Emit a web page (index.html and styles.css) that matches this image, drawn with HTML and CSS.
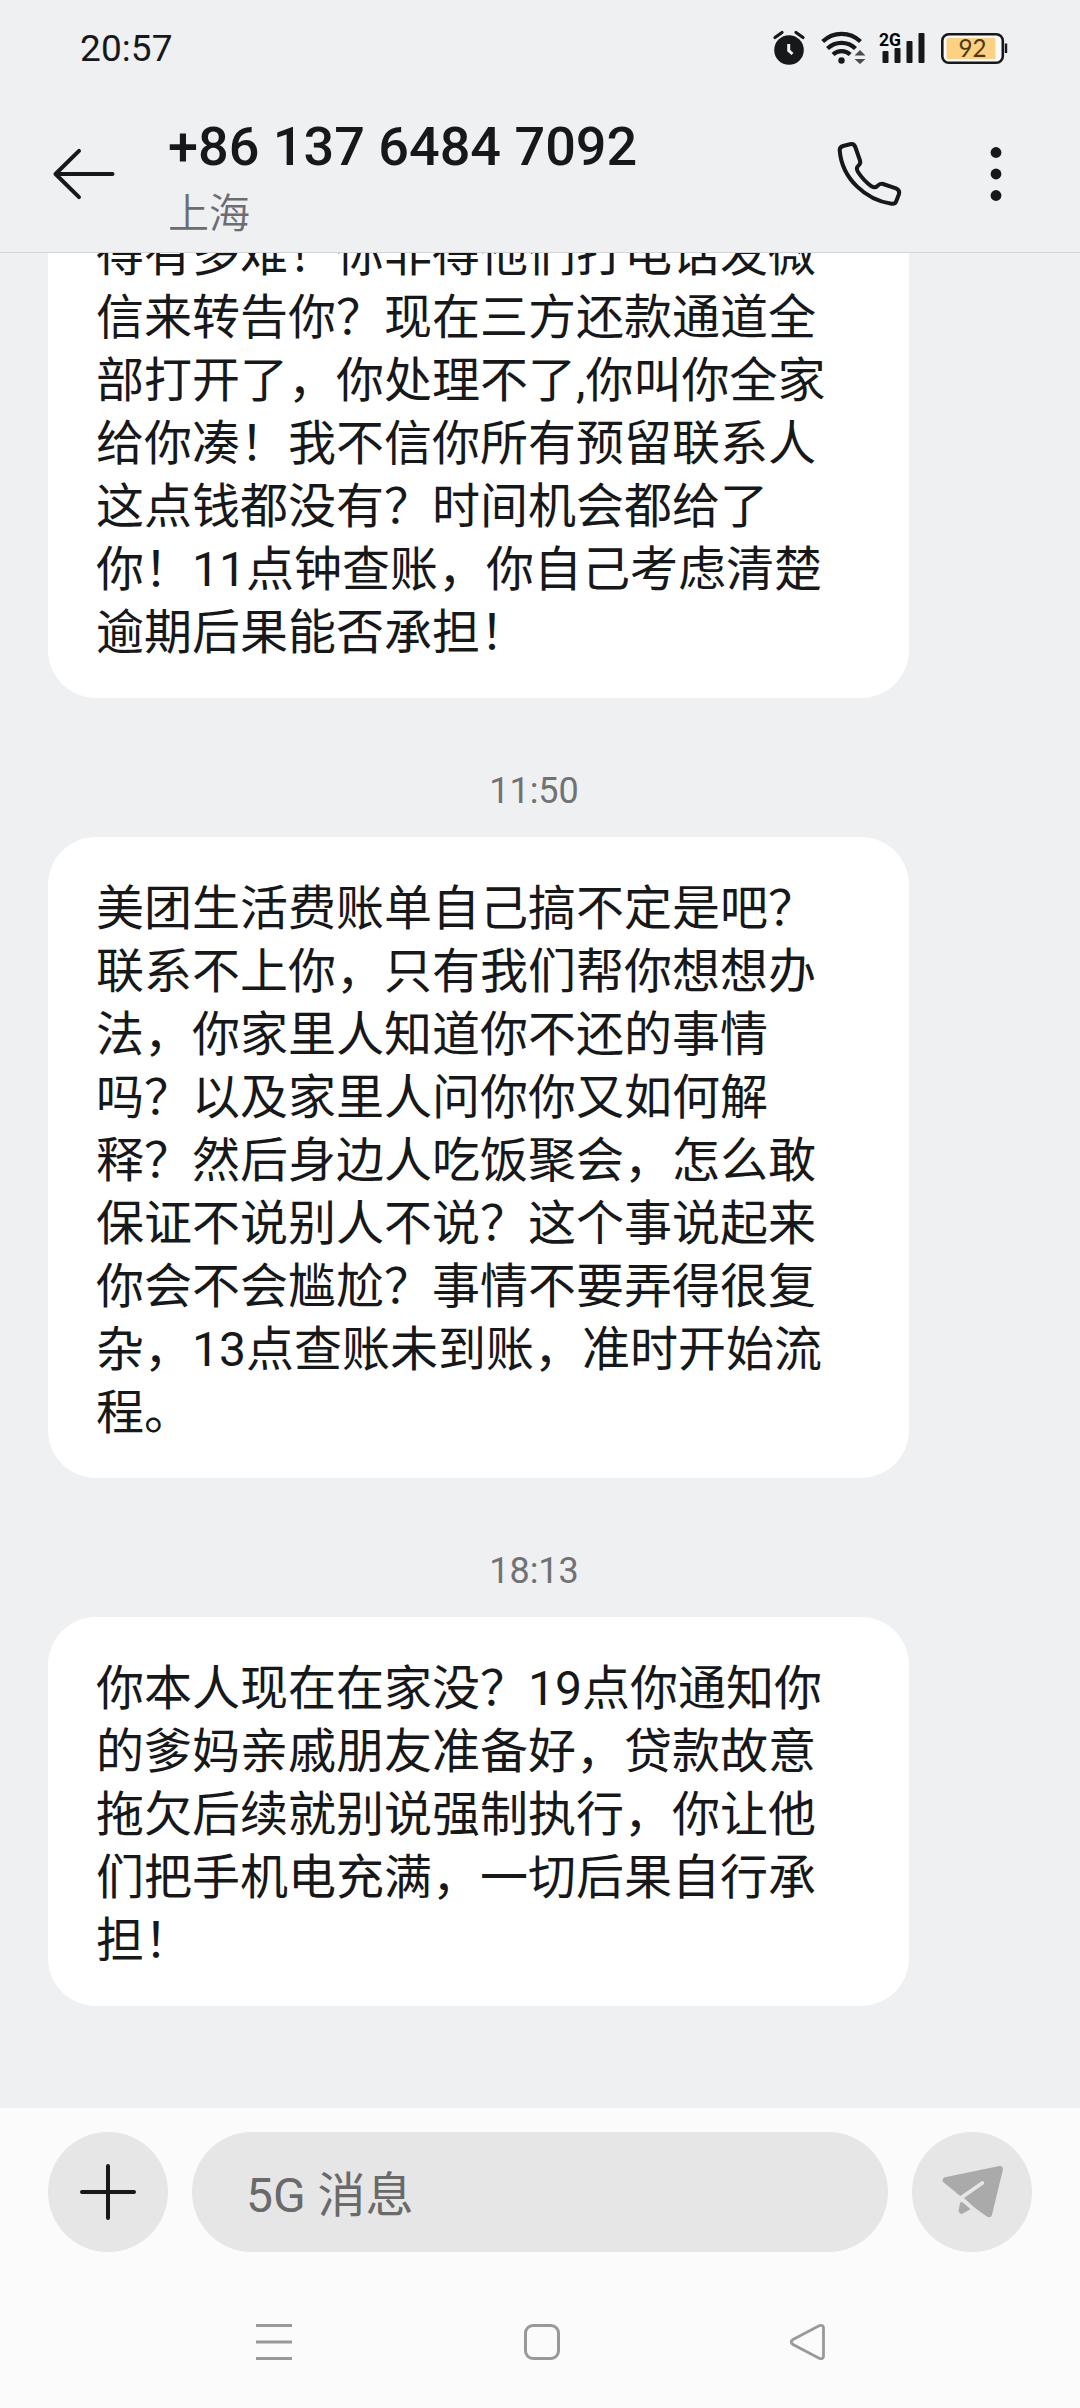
FILE: index.html
```html
<!DOCTYPE html>
<html lang="zh-CN">
<head>
<meta charset="utf-8">
<title>短信</title>
<link rel="stylesheet" href="styles.css">
</head>
<body>
<div class="screen">
  <div class="status">
    <span class="clock">20:57</span>
    <svg class="status-icons" width="270" height="60" viewBox="770 18 270 60">
      <g fill="#17181a">
        <circle cx="789" cy="50" r="14.8"/>
        <path d="M775 37.500L782 32.500M803 37.500L796 32.500" stroke="#17181a" stroke-width="3.200" stroke-linecap="round"/>
        <path d="M788.700 44V50.500L792.500 54" fill="none" stroke="#eff0f2" stroke-width="3"/>
        <g fill="none" stroke="#17181a" stroke-width="4.200">
          <path d="M822.700 41.500A27 27 0 0 1 860.500 41.500"/>
          <path d="M827.500 48.500A20 20 0 0 1 855.500 48.500"/>
          <path d="M833 54.500A12.500 12.500 0 0 1 850.200 54.500"/>
        </g>
        <circle cx="841.500" cy="60.500" r="3.200"/>
        <path d="M854.500 55.500L860 50L865.500 55.500ZM854.500 59L860 64L865.500 59Z" fill="#4a4b4d"/>
        <rect x="882.500" y="51" width="6" height="12" rx="1"/>
        <rect x="894.500" y="48" width="6" height="15" rx="1"/>
        <rect x="906.500" y="41" width="6" height="22" rx="1"/>
        <rect x="918.500" y="33" width="6" height="30" rx="1"/>
      </g>
      <text x="879" y="46" class="net" textLength="22" lengthAdjust="spacingAndGlyphs">2G</text>
      <rect x="942.300" y="34.300" width="60.500" height="28.500" rx="6.500" fill="#fafafa" stroke="#17181a" stroke-width="2.600"/>
      <rect x="946.500" y="38" width="49" height="21" rx="1.500" fill="#fcd182"/>
      <path d="M1006 43.500V53" stroke="#17181a" stroke-width="2.400"/>
      <text x="958.500" y="56.500" class="level" textLength="28" lengthAdjust="spacingAndGlyphs">92</text>
    </svg>
  </div>
  <header class="header">
    <svg class="back" width="68" height="60" viewBox="50 144 68 60" fill="none" stroke="#17181a" stroke-width="4" stroke-linecap="round" stroke-linejoin="round"><path d="M112.500 174H55.500M79 150.800L55.500 174L79 197.200"/></svg>
    <div class="contact">
      <div class="number">+86 137 6484 7092</div>
      <div class="place">上海</div>
    </div>
    <svg class="actions" width="180" height="72" viewBox="830 138 180 72">
      <path d="M843 146L850 144.200Q854 143.300 855.300 147L860 160.500Q861 163.500 858.500 165.500Q855.500 168 858 172Q863.500 180.500 871.500 186.300Q875 188.500 877.500 185.800Q880 183.300 883 184L896 188.300Q900 190 899 194L896.500 200.500Q895.500 204.300 891.500 203.800C866 200 842 179 839.700 150.500Q839.500 147.200 843 146Z" fill="none" stroke="#17181a" stroke-width="4" stroke-linejoin="round"/>
      <g fill="#17181a"><circle cx="996" cy="152.500" r="5.400"/><circle cx="996" cy="174" r="5.400"/><circle cx="996" cy="195.500" r="5.400"/></g>
    </svg>
  </header>
  <main class="thread">
    <div class="bubble">得有多难！你非得他们打电话发微<br>信来转告你？现在三方还款通道全<br>部打开了，你处理不了,你叫你全家<br>给你凑！我不信你所有预留联系人<br>这点钱都没有？时间机会都给了<br>你！11点钟查账，你自己考虑清楚<br>逾期后果能否承担！</div>
    <time class="stamp">11:50</time>
    <div class="bubble">美团生活费账单自己搞不定是吧？<br>联系不上你，只有我们帮你想想办<br>法，你家里人知道你不还的事情<br>吗？以及家里人问你你又如何解<br>释？然后身边人吃饭聚会，怎么敢<br>保证不说别人不说？这个事说起来<br>你会不会尴尬？事情不要弄得很复<br>杂，13点查账未到账，准时开始流<br>程。</div>
    <time class="stamp">18:13</time>
    <div class="bubble">你本人现在在家没？19点你通知你<br>的爹妈亲戚朋友准备好，贷款故意<br>拖欠后续就别说强制执行，你让他<br>们把手机电充满，一切后果自行承<br>担！</div>
  </main>
  <footer class="footer">
    <div class="composer">
      <div class="round"><svg width="60" height="60" viewBox="0 0 60 60" stroke="#17181a" stroke-width="4" stroke-linecap="round"><path d="M4 30H56M30 4V56"/></svg></div>
      <div class="input">5G 消息</div>
      <div class="round"><svg width="120" height="120" viewBox="912 2132 120 120"><g fill="#aaa" stroke="#aaa" stroke-width="6" stroke-linejoin="round"><path d="M945.700 2180.200L1000 2169L989 2214.200L966.500 2198.500L962.500 2194Z"/></g><path d="M961.500 2203.500L969 2208.500L961.500 2212.500L960 2211Z" fill="#aaa" stroke="#aaa" stroke-width="3" stroke-linejoin="round"/><path d="M960 2198.500L982.300 2183M961.500 2198.500L976 2211.500" fill="none" stroke="#e6e6e6" stroke-width="3.800" stroke-linecap="round"/></svg></div>
    </div>
    <nav class="nav">
      <svg width="42" height="42" viewBox="0 0 42 42" fill="none" stroke="#999" stroke-width="3"><path d="M3 4.500H39M3 21H39M3 37.500H39"/></svg>
      <svg width="42" height="42" viewBox="0 0 42 42" fill="none" stroke="#999" stroke-width="3"><rect x="5.500" y="4.500" width="33" height="33" rx="7.500"/></svg>
      <svg width="42" height="42" viewBox="0 0 42 42" fill="none" stroke="#999" stroke-width="2.800"><path d="M6 18.500L32.500 4.500Q36.500 3.500 36.500 7V35Q36.500 38.500 32.500 37.500L6 23.500Q2.500 21 6 18.500Z"/></svg>
    </nav>
  </footer>
</div>
</body>
</html>
```
FILE: styles.css
```css
* { box-sizing: border-box; }
body { margin: 0; background: #eff0f2; color: #17181a; font-family: Roboto, "Noto Sans CJK SC", sans-serif; }
svg { display: block; flex: none; }
.screen { width: 1080px; height: 2408px; display: flex; flex-direction: column; overflow: hidden; }
.status { height: 96px; flex: none; display: flex; justify-content: space-between; align-items: center; padding: 0 40px 0 80px; }
.clock { font-size: 37px; line-height: 42px; letter-spacing: 0.1px; padding-top: 1px; }
.net { font: 700 19px Roboto, sans-serif; }
.level { font: 400 25px Lato, sans-serif; fill: #4a3a15; }
.header { height: 157px; flex: none; display: flex; align-items: center; padding: 0 70px 0 50px; border-bottom: 1px solid #d4d5d7; }
.contact { flex: 1; padding: 11px 0 0 50px; }
.number { font-size: 54px; font-weight: 500; line-height: 62px; white-space: nowrap; }
.place { font-size: 41px; line-height: 60px; padding-top: 6px; font-weight: 350; color: #6c6d6f; }
.thread { flex: 1; min-height: 0; overflow: hidden; display: flex; flex-direction: column; justify-content: flex-end; align-items: flex-start; padding: 0 48px 102px; }
.bubble { flex: none; width: 861px; padding: 40px 48px 34px; border-radius: 48px; background: #fff; font-size: 48px; line-height: 63px; font-weight: 400; white-space: nowrap; }
.stamp { flex: none; height: 139px; width: 100%; padding: 72px 12px 0 0; text-align: center; font-size: 36px; line-height: 42px; color: #717274; }
.footer { height: 300px; flex: none; background: #fbfbfb; padding: 24px 48px 0; }
.composer { display: flex; gap: 24px; }
.round, .input { height: 120px; border-radius: 60px; background: #e6e6e6; display: flex; align-items: center; }
.round { width: 120px; flex: none; justify-content: center; }
.input { flex: 1; padding: 0 0 2px 54px; font-size: 48px; color: #6a6a6a; }
.nav { display: flex; justify-content: space-between; padding: 69px 203px 0 205px; }
```
